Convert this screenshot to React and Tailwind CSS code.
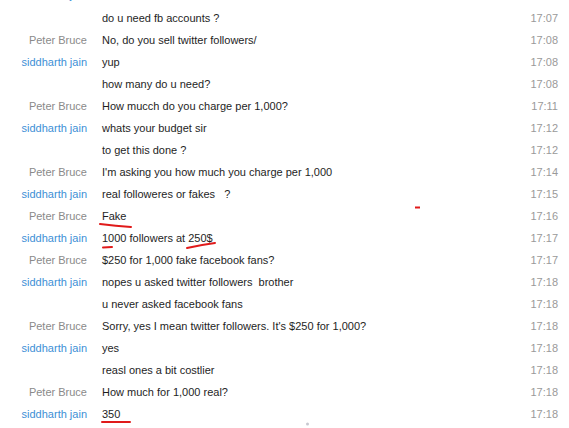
const messages = [
  { from: "", text: "do u need fb accounts ?", time: "17:07" },
  { from: "Peter Bruce", text: "No, do you sell twitter followers/", time: "17:08" },
  { from: "siddharth jain", text: "yup", time: "17:08" },
  { from: "", text: "how many do u need?", time: "17:08" },
  { from: "Peter Bruce", text: "How mucch do you charge per 1,000?", time: "17:11" },
  { from: "siddharth jain", text: "whats your budget sir", time: "17:12" },
  { from: "", text: "to get this done ?", time: "17:12" },
  { from: "Peter Bruce", text: "I'm asking you how much you charge per 1,000", time: "17:14" },
  { from: "siddharth jain", text: "real followeres or fakes   ?", time: "17:15" },
  { from: "Peter Bruce", text: "Fake", time: "17:16" },
  { from: "siddharth jain", text: "1000 followers at 250$", time: "17:17" },
  { from: "Peter Bruce", text: "$250 for 1,000 fake facebook fans?", time: "17:17" },
  { from: "siddharth jain", text: "nopes u asked twitter followers  brother", time: "17:18" },
  { from: "", text: "u never asked facebook fans", time: "17:18" },
  { from: "Peter Bruce", text: "Sorry, yes I mean twitter followers. It's $250 for 1,000?", time: "17:18" },
  { from: "siddharth jain", text: "yes", time: "17:18" },
  { from: "", text: "reasl ones a bit costlier", time: "17:18" },
  { from: "Peter Bruce", text: "How much for 1,000 real?", time: "17:18" },
  { from: "siddharth jain", text: "350", time: "17:18" },
];

function Row({ msg, className = "h-[22px]" }) {
  const nameColor = msg.from === "Peter Bruce" ? "text-[#8a8a8a]" : "text-[#3d8fd6]";
  return (
    <div className={`flex items-center ${className}`}>
      <div className={`w-[87px] shrink-0 text-right ${nameColor}`}>{msg.from}</div>
      <div className="ml-[15px] flex-1 whitespace-pre text-[#1e1e1e]">{msg.text}</div>
      <div className="w-[60px] shrink-0 pr-[11px] text-right text-[#9a9a9a]">{msg.time}</div>
    </div>
  );
}

export default function App() {
  return (
    <div
      className="relative h-[428px] w-[569px] overflow-hidden bg-white text-[11px]"
      style={{ fontFamily: "'Liberation Sans', Arial, sans-serif" }}
    >
      {/* a linha de cima fica cortada, só o rabo do "j" aparece */}
      <div className="-mt-[17px]">
        <Row msg={{ from: "siddharth jain", text: "", time: "" }} className="h-[24px]" />
        {messages.map((m, i) => (
          <Row key={i} msg={m} />
        ))}
      </div>

      {/* marcas vermelhas por cima */}
      <svg className="pointer-events-none absolute left-0 top-0" width="569" height="428">
        <path d="M100 224 Q116 226 131 227" stroke="#e01a1a" strokeWidth="2" fill="none" strokeLinecap="round" />
        <path d="M103 247.5 L112 247" stroke="#e01a1a" strokeWidth="2" fill="none" strokeLinecap="round" />
        <path d="M187 248 Q200 245 215 243" stroke="#e01a1a" strokeWidth="2" fill="none" strokeLinecap="round" />
        <path d="M102 422 L130 422" stroke="#e01a1a" strokeWidth="2" fill="none" strokeLinecap="round" />
        <path d="M415 207.5 L420 207.5" stroke="#e01a1a" strokeWidth="2" fill="none" />
        <circle cx="307.5" cy="424" r="1.5" fill="#c8c8d0" />
      </svg>
    </div>
  );
}
